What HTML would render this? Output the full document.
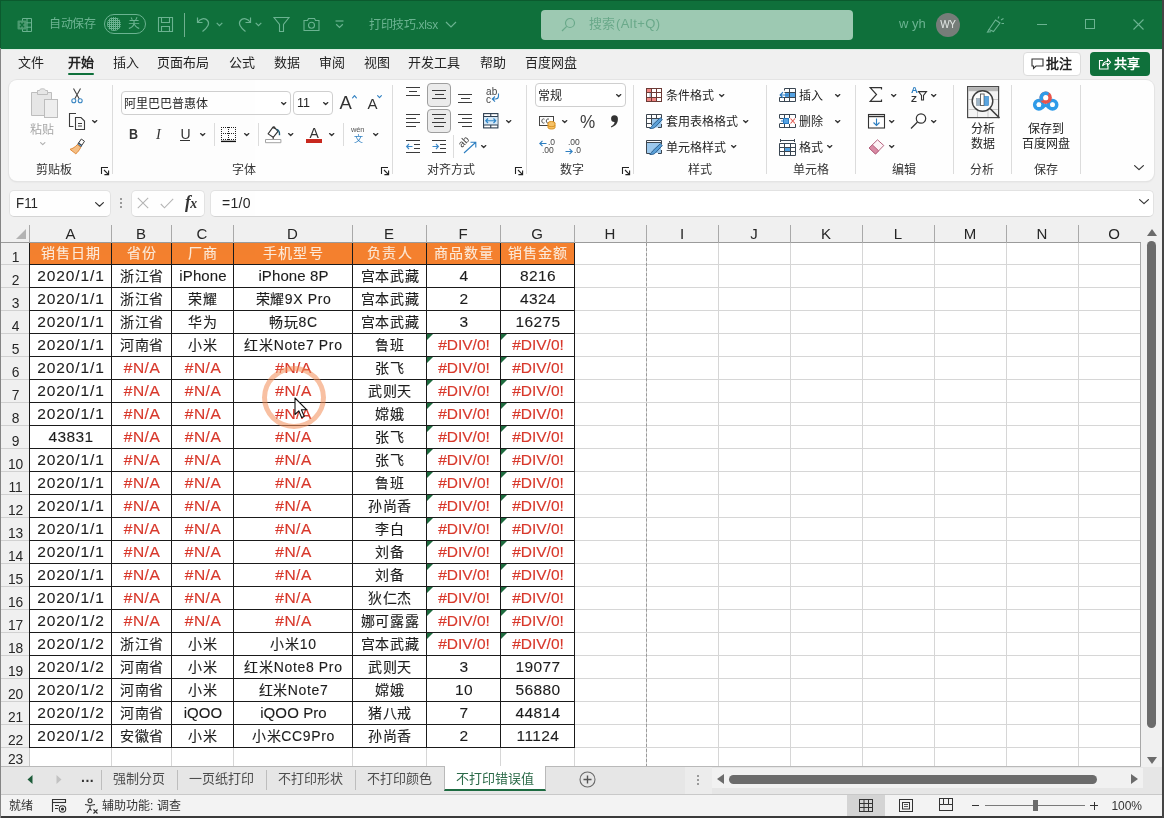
<!DOCTYPE html>
<html lang="zh-CN"><head><meta charset="utf-8"><title>打印技巧.xlsx - Excel</title>
<style>
*{box-sizing:border-box;margin:0;padding:0}
html,body{width:1164px;height:818px;overflow:hidden;background:#f0f0f0}
body{font-family:"Liberation Sans",sans-serif;font-size:13px;color:#242424}
#app{position:relative;width:1164px;height:818px;overflow:hidden;background:#f0f0f0;will-change:transform;opacity:.999}
.abs{position:absolute}
svg{position:absolute;overflow:visible}
/* ---------- title bar ---------- */
#title{position:absolute;left:0;top:0;width:1164px;height:49px;background:#0f703b}
#title .t{position:absolute;color:#6bb391;font-size:12px;white-space:nowrap;line-height:14px}
#search{position:absolute;left:541px;top:10px;width:312px;height:30px;background:#9dc9b2;border-radius:4px}
#search span{position:absolute;left:48px;top:7px;letter-spacing:.45px;font-size:13px;color:#6aa98a;line-height:14px;white-space:nowrap}
#avatar{position:absolute;left:936px;top:13px;width:24px;height:24px;border-radius:50%;background:#767d79;color:#e4e9e6;font-size:10px;text-align:center;line-height:24px;letter-spacing:-.3px}
/* ---------- menu tabs ---------- */
#tabs{position:absolute;left:0;top:50px;width:1164px;height:30px;background:#f0f0f0}
#tabs .m{position:absolute;top:5px;font-size:13px;line-height:16px;color:#242424;white-space:nowrap}
#tabs .m.on{font-weight:bold}
#tabs .ul{position:absolute;left:68px;top:23px;width:26px;height:2px;background:#0f703b;border-radius:1px}
.btn{position:absolute;border-radius:4px;font-size:13px;font-weight:bold;line-height:16px;white-space:nowrap}
/* ---------- ribbon ---------- */
#ribbon{position:absolute;left:9px;top:80px;width:1145px;height:101px;background:#fefefe;border-radius:8px;box-shadow:0 0 0 1px #e4e4e4,0 1px 2px rgba(0,0,0,.1)}
#rb{position:absolute;left:0;top:0;width:1164px;height:190px}
#rb .sep{position:absolute;top:85px;width:1px;height:89px;background:#dcdcdc}
#rb .ssep{position:absolute;top:123px;width:1px;height:23px;background:#dcdcdc}
#rb .lb{position:absolute;top:163px;font-size:12px;line-height:15px;color:#333;white-space:nowrap;transform:translateX(-50%)}
#rb .tx{position:absolute;font-size:12px;line-height:15px;color:#242424;white-space:nowrap}
#rb .box{position:absolute;background:#fff;border:1px solid #cfcfcf;border-radius:4px}
#rb .sel{position:absolute;background:#ebebeb;border:1px solid #9e9e9e;border-radius:4px}
/* ---------- formula bar ---------- */
.fbox{position:absolute;top:190px;height:27px;background:#fff;border-radius:5px;border:1px solid #e2e2e2;border-bottom-color:#d4d4d4}
/* ---------- grid ---------- */
#grid{position:absolute;left:0;top:0;width:1164px;height:818px;pointer-events:none}
.colhdr{position:absolute;left:0;top:224px;width:1141px;height:19px;background:#f0f0f0;border-bottom:1px solid #9b9b9b;z-index:3}
.corner{z-index:4;position:absolute;left:15px;top:228px;width:12px;height:12px}
.ch{position:absolute;z-index:4;top:225px;height:17px;line-height:17px;text-align:center;font-size:15px;color:#262626}
.chsep{z-index:4;position:absolute;top:225px;width:1px;height:18px;background:#a9a9a9}
.sheet{position:absolute;left:30px;top:243px;width:1111px;height:523px;background:#fff}
.gv{position:absolute;top:243px;width:1px;height:524px;background:#d6d6d6}
.gv2{position:absolute;top:748px;width:1px;height:19px;background:#d6d6d6}
.gh{position:absolute;left:30px;width:1110px;height:1px;background:#d6d6d6}
.pb{position:absolute;left:646px;top:243px;width:0;height:524px;border-left:1px dashed #9a9a9a}
.rowhdr{position:absolute;left:0;top:243px;width:30px;height:524px;background:#f0f0f0;border-right:1px solid #c6c6c6}
.rh{position:absolute;left:0;width:30px;transform:scaleX(.92);transform-origin:22px 0;height:23px;line-height:29px;text-align:center;font-size:15px;color:#262626}
.rhsep{position:absolute;left:0;width:29px;height:1px;background:#d0d0d0}
.c{position:absolute;height:24px;border:1px solid #1a1a1a;background:#fff;text-align:center;font-size:15.5px;line-height:22px;color:#1c1c1c;letter-spacing:.7px;white-space:nowrap;overflow:hidden;-webkit-text-stroke:.1px currentColor}
.c span{position:relative;left:.5px}
.c.zh{letter-spacing:.65px;font-size:14px;line-height:22px;-webkit-text-stroke:.12px currentColor}
.c.la{font-size:15px;letter-spacing:.1px}
.c.nm{letter-spacing:.9px}
.c.pn{letter-spacing:.4px}
.c.hd{background:#f4802e;color:#fce9d8;letter-spacing:1.2px;font-size:14px}
.c.er{color:#d8382b;letter-spacing:.5px;-webkit-text-stroke:.15px currentColor}
.c.dv{letter-spacing:0}
.tri{position:absolute;left:0;top:0;width:0;height:0;border-top:6px solid #1d6b3e;border-right:6px solid transparent}
/* ---------- bottom ---------- */
#sheetbar{position:absolute;left:0;top:767px;width:1164px;height:27px;background:#e6e6e6}
#sheetbar .st{position:absolute;top:4px;font-size:13px;line-height:16px;color:#4d4d4d;white-space:nowrap}
#sheetbar .ss{position:absolute;top:3px;width:1px;height:20px;background:#bdbdbd}
#status{position:absolute;left:0;top:794px;width:1164px;height:24px;background:#f3f3f3;border-top:1px solid #c9c9c9}
#status .s{position:absolute;top:5px;font-size:12px;line-height:14px;color:#333;white-space:nowrap}

</style></head><body>
<div id="app">
<div id="title">
  <div class="abs" style="left:0;top:0;width:1164px;height:1px;background:#0b5a2e"></div><div class="abs" style="left:0;top:0;width:1px;height:48px;background:#0b5a2e"></div>
  <!-- excel icon -->
  <svg style="left:17px;top:17px" width="16" height="16" viewBox="0 0 16 16" fill="none" stroke="#6bb391" stroke-width="1"><path d="M5.5 1.5H14.5V14.5H5.5Z M5.5 5.8H14.5 M5.5 10.2H14.5 M10 1.5V14.5"/><rect x="0.5" y="3.5" width="9" height="9" rx="1" fill="#4c9a70" stroke="none"/><path d="M3 5.7L7 10.3M7 5.7L3 10.3" stroke="#0f703b" stroke-width="1.3"/></svg>
  <span class="t" style="left:49px;top:17px;letter-spacing:-.3px">自动保存</span>
  <!-- toggle -->
  <div class="abs" style="left:104px;top:14px;width:42px;height:20px;border:1px solid #6bb391;border-radius:10px"></div>
  <div class="abs" style="left:107px;top:17px;width:14px;height:14px;border-radius:50%;background:repeating-linear-gradient(90deg,#6bb391 0 1px,transparent 1px 2px),repeating-linear-gradient(0deg,#6bb391 0 1px,#0f703b 1px 2px)"></div>
  <span class="t" style="left:128px;top:17px">关</span>
  <!-- save -->
  <svg style="left:157px;top:16px" width="17" height="17" viewBox="0 0 17 17" fill="none" stroke="#6bb391" stroke-width="1.1"><path d="M1.5 1.5H15.5V15.5H1.5Z"/><path d="M4.5 1.5V6.5H12.5V1.5"/><path d="M4.5 15.5V10.5H12.5V15.5"/></svg>
  <div class="abs" style="left:184px;top:13px;width:1px;height:24px;background:#6fb08f"></div>
  <!-- undo -->
  <svg style="left:196px;top:16px" width="17" height="17" viewBox="0 0 17 17" fill="none" stroke="#6bb391" stroke-width="1.2"><path d="M1.5 1.5V6.5H6.5"/><path d="M1.8 6.2C4 2.5 9 1.5 11.5 4.5C14 7.5 12 11 6.5 15.5"/></svg>
  <svg style="left:216px;top:22px" width="7" height="5" viewBox="0 0 7 5" fill="none" stroke="#6bb391" stroke-width="1.2"><path d="M.7 .8L3.5 3.6L6.3 .8"/></svg>
  <!-- redo -->
  <svg style="left:235px;top:16px" width="17" height="17" viewBox="0 0 17 17" fill="none" stroke="#6bb391" stroke-width="1.2"><path d="M15.5 1.5V6.5H10.5"/><path d="M15.2 6.2C13 2.5 8 1.5 5.5 4.5C3 7.5 5 11 10.5 15.5"/></svg>
  <svg style="left:255px;top:22px" width="7" height="5" viewBox="0 0 7 5" fill="none" stroke="#6bb391" stroke-width="1.2"><path d="M.7 .8L3.5 3.6L6.3 .8"/></svg>
  <!-- filter -->
  <svg style="left:273px;top:16px" width="17" height="17" viewBox="0 0 17 17" fill="none" stroke="#6bb391" stroke-width="1.1"><path d="M1 1.5H16L10.5 8.5V15.5H6.5V8.5Z"/></svg>
  <!-- camera -->
  <svg style="left:303px;top:17px" width="17" height="15" viewBox="0 0 17 15" fill="none" stroke="#6bb391" stroke-width="1.1"><path d="M1 3.5H4.5L5.5 1.5H11.5L12.5 3.5H16V13.5H1Z"/><circle cx="8.5" cy="8.2" r="3"/></svg>
  <!-- customize -->
  <svg style="left:335px;top:20px" width="9" height="9" viewBox="0 0 9 9" fill="none" stroke="#6bb391" stroke-width="1.2"><path d="M.5 1H8.5"/><path d="M1.2 4.2L4.5 7.4L7.8 4.2"/></svg>
  <span class="t" style="left:369px;top:18px;font-size:12px;letter-spacing:-.35px">打印技巧.xlsx</span>
  <svg style="left:445px;top:21px" width="12" height="7" viewBox="0 0 12 7" fill="none" stroke="#6bb391" stroke-width="1.2"><path d="M1 1L6 6L11 1"/></svg>
  <div id="search">
    <svg style="left:20px;top:7px" width="15" height="15" viewBox="0 0 15 15" fill="none" stroke="#6aa98a" stroke-width="1.2"><circle cx="9" cy="6" r="4.5"/><path d="M5.7 9.3L1 14"/></svg>
    <span>搜索(Alt+Q)</span>
  </div>
  <span class="t" style="left:899px;top:17px;font-size:13px">w yh</span>
  <div id="avatar">WY</div>
  <!-- coming soon / pen icon -->
  <svg style="left:986px;top:15px" width="19" height="18" viewBox="0 0 19 18" fill="none" stroke="#6bb391" stroke-width="1.1"><path d="M3 14.5L9.5 5L14 8L7.5 16.5Z"/><path d="M3 14.5L1.5 17L5 16.7"/><path d="M12 3.5L13 1.5M15 5L17.5 3.5M15.5 8.5H18"/></svg>
  <!-- window controls -->
  <div class="abs" style="left:1037px;top:24px;width:10px;height:1px;background:#6bb391"></div>
  <div class="abs" style="left:1085px;top:19px;width:10px;height:10px;border:1px solid #6bb391"></div>
  <svg style="left:1133px;top:19px" width="11" height="11" viewBox="0 0 11 11" fill="none" stroke="#6bb391" stroke-width="1.1"><path d="M.5 .5L10.5 10.5M10.5 .5L.5 10.5"/></svg>
</div>
<div class="abs" style="left:0;top:49px;width:1164px;height:1px;background:#dcefe4"></div>
<div id="tabs">
  <span class="m" style="left:18px">文件</span>
  <span class="m on" style="left:68px">开始</span>
  <span class="m" style="left:113px">插入</span>
  <span class="m" style="left:157px">页面布局</span>
  <span class="m" style="left:229px">公式</span>
  <span class="m" style="left:274px">数据</span>
  <span class="m" style="left:319px">审阅</span>
  <span class="m" style="left:364px">视图</span>
  <span class="m" style="left:408px">开发工具</span>
  <span class="m" style="left:480px">帮助</span>
  <span class="m" style="left:525px">百度网盘</span>
  <div class="ul"></div>
  <div class="btn" style="left:1023px;top:2px;width:58px;height:24px;background:#fff;border:1px solid #dcdcdc;color:#242424">
    <svg style="left:7px;top:5px" width="13" height="12" viewBox="0 0 13 12" fill="none" stroke="#333" stroke-width="1.1"><path d="M1 1H12V8H5L2.5 10.5V8H1Z"/></svg>
    <span class="abs" style="left:22px;top:3px">批注</span>
  </div>
  <div class="btn" style="left:1090px;top:2px;width:60px;height:24px;background:#0f703b;color:#fff">
    <svg style="left:8px;top:5px" width="13" height="13" viewBox="0 0 13 13" fill="none" stroke="#fff" stroke-width="1.1"><path d="M5 3.5H1.5V12H10V9"/><path d="M4.5 9C5 6 7 4.5 9.5 4.5V2L12.5 5.3L9.5 8.5V6.5C7.5 6.5 5.8 7.2 4.5 9Z"/></svg>
    <span class="abs" style="left:24px;top:4px">共享</span>
  </div>
</div>
<div id="ribbon"></div>
<div id="rb">
<svg style="left:31px;top:88px" width="28" height="31" viewBox="0 0 28 31" fill="#e6e6e6" stroke="#bdbdbd" stroke-width="1">
<path d="M.5 4.5H6.5V2.5H8.5C8.5 .2 14.5 .2 14.5 2.5H16.5V4.5H20.5V27.5H.5Z"/>
<path d="M6.5 4.5V6.5H16.5V4.5" fill="none"/>
<rect x="13.5" y="11.5" width="13" height="18" fill="#eeeeee"/></svg>
<span class="tx" style="left:30px;top:123px;color:#a6a6a6">粘贴</span>
<svg style="left:40.2px;top:141.9px" width="5.5" height="3.6" viewBox="0 0 5.5 3.6" fill="none" stroke="#b0b0b0" stroke-width="1.2" stroke-linecap="round" stroke-linejoin="round"><path d="M.6 .6L2.75 2.6L4.9 .6"/></svg>
<svg style="left:71px;top:88px" width="12" height="16" viewBox="0 0 12 16" fill="none" stroke-width="1.1">
<path d="M2.5 .5L8.3 11M9.5 .5L3.7 11" stroke="#444"/>
<circle cx="2.8" cy="12.8" r="2" stroke="#3a86c2"/><circle cx="9.2" cy="12.8" r="2" stroke="#3a86c2"/></svg>
<svg style="left:69px;top:113px" width="17" height="17" viewBox="0 0 17 17" fill="none" stroke="#3b3b3b" stroke-width="1.1">
<path d="M4.5 13.5H.5V.5H7"/>
<path d="M6.5 4.5H12L15.5 8V16.5H6.5Z" fill="#fafafa"/>
<path d="M9 10.5H13M9 13H13" stroke-width="1"/></svg>
<svg style="left:92.3px;top:119.5px" width="5.4" height="3.5" viewBox="0 0 5.4 3.5" fill="none" stroke="#333" stroke-width="1.35" stroke-linecap="round" stroke-linejoin="round"><path d="M.6 .6L2.7 2.5L4.800000000000001 .6"/></svg>
<svg style="left:69px;top:138px" width="17" height="17" viewBox="0 0 17 17" fill="none" stroke-width="1">
<path d="M12.3 1L15.5 3.3L12.8 7.3L9.6 5Z" fill="#fff" stroke="#3d3d3d"/>
<path d="M9.6 5L12.8 7.3L11.8 9L8.4 6.6Z" fill="#5b9bd5" stroke="#3d3d3d"/>
<path d="M8.4 6.6L11.8 9.2C10.5 12 8.5 14.5 6.8 15.8L1 11.3C3.5 10.8 6.5 8.8 8.4 6.6Z" fill="#f6bf85" stroke="#e08a3a"/></svg>
<span class="lb" style="left:54px">剪贴板</span>
<svg style="left:101px;top:167px" width="9" height="9" viewBox="0 0 9 9" fill="none" stroke="#222" stroke-width="1.1"><path d="M.5 7V.5H7"/><path d="M3 3L7.6 7.6M3.4 7.6H7.6V3.4"/></svg>
<div class="sep" style="left:112px"></div>
<div class="box" style="left:121px;top:91px;width:170px;height:24px"></div>
<span class="tx" style="left:124px;top:97px;">阿里巴巴普惠体</span>
<svg style="left:281.3px;top:101.5px" width="5.4" height="3.5" viewBox="0 0 5.4 3.5" fill="none" stroke="#333" stroke-width="1.35" stroke-linecap="round" stroke-linejoin="round"><path d="M.6 .6L2.7 2.5L4.800000000000001 .6"/></svg>
<div class="box" style="left:293px;top:91px;width:40px;height:24px"></div>
<span class="tx" style="left:297px;top:96px;font-size:12.5px">11</span>
<svg style="left:323.3px;top:101.5px" width="5.4" height="3.5" viewBox="0 0 5.4 3.5" fill="none" stroke="#333" stroke-width="1.35" stroke-linecap="round" stroke-linejoin="round"><path d="M.6 .6L2.7 2.5L4.800000000000001 .6"/></svg>
<span class="tx" style="left:339.5px;top:92.5px;font-size:18.5px;line-height:20px;color:#333">A</span>
<svg style="left:351.5px;top:95.4px" width="5" height="3.6" viewBox="0 0 5 3.6" fill="none" stroke="#2e7fc1" stroke-width="1.1" stroke-linecap="round" stroke-linejoin="round"><path d="M.6 2.8L2.5 .6L4.4 2.8"/></svg>
<span class="tx" style="left:367.5px;top:95.5px;font-size:15px;line-height:16px;color:#333">A</span>
<svg style="left:376.5px;top:95.4px" width="5" height="3.6" viewBox="0 0 5 3.6" fill="none" stroke="#2e7fc1" stroke-width="1.1" stroke-linecap="round" stroke-linejoin="round"><path d="M.6 .6L2.5 2.6L4.4 .6"/></svg>
<span class="tx" style="left:129px;top:126px;font-size:14.5px;font-weight:bold;line-height:16px;color:#333;transform:scaleX(.86);transform-origin:0 0">B</span>
<span class="tx" style="left:156px;top:126px;font-size:14.5px;font-style:italic;line-height:16px;color:#333;font-family:'Liberation Serif',serif">I</span>
<span class="tx" style="left:180.5px;top:126px;font-size:14px;line-height:16px;color:#333">U</span>
<div class="abs" style="left:180px;top:140px;width:10px;height:1px;background:#333"></div>
<svg style="left:200.3px;top:133.4px" width="5.4" height="3.5" viewBox="0 0 5.4 3.5" fill="none" stroke="#333" stroke-width="1.35" stroke-linecap="round" stroke-linejoin="round"><path d="M.6 .6L2.7 2.5L4.800000000000001 .6"/></svg>
<div class="ssep" style="left:214px;top:123px;height:23px"></div>
<svg style="left:221px;top:127px" width="16" height="16" viewBox="0 0 16 16" fill="none" stroke="#222" stroke-width="1">
<path d="M0 .5H15M0 6.5H15M0 12.5H15" stroke-dasharray="1 1"/>
<path d="M.5 0V13M7.5 0V13M14.5 0V13" stroke-dasharray="1 1"/>
<path d="M0 14.4H15" stroke-width="1.4" stroke="#111"/></svg>
<svg style="left:244.3px;top:133.4px" width="5.4" height="3.5" viewBox="0 0 5.4 3.5" fill="none" stroke="#333" stroke-width="1.35" stroke-linecap="round" stroke-linejoin="round"><path d="M.6 .6L2.7 2.5L4.800000000000001 .6"/></svg>
<div class="ssep" style="left:258px;top:123px;height:23px"></div>
<svg style="left:265px;top:126px" width="17" height="18" viewBox="0 0 17 18" fill="none" stroke="#333" stroke-width="1.1" stroke-linejoin="round">
<path d="M7.6 1.6L3.1 7.9L8.2 11.3L12.8 5.6C11.5 3 9.5 1.6 7.6 1.6Z" fill="#fff"/>
<path d="M7.6 1.6C8.3 .4 9.8 .6 10 2.3"/>
<path d="M11.6 3.4C13.8 4 14.7 6.3 14.5 9.3" stroke="#1d5a75" stroke-width="1.4"/>
<path d="M8.2 11.3V13.4"/>
<rect x=".5" y="13.5" width="15.4" height="3.2" fill="#fff" stroke="#a3a3a3" stroke-width="1"/></svg>
<svg style="left:288.3px;top:133.4px" width="5.4" height="3.5" viewBox="0 0 5.4 3.5" fill="none" stroke="#333" stroke-width="1.35" stroke-linecap="round" stroke-linejoin="round"><path d="M.6 .6L2.7 2.5L4.800000000000001 .6"/></svg>
<span class="tx" style="left:309.5px;top:124.5px;font-size:14px;line-height:16px;color:#333">A</span>
<div class="abs" style="left:306px;top:139px;width:16px;height:4px;background:#c8281e"></div>
<svg style="left:329.3px;top:133.4px" width="5.4" height="3.5" viewBox="0 0 5.4 3.5" fill="none" stroke="#333" stroke-width="1.35" stroke-linecap="round" stroke-linejoin="round"><path d="M.6 .6L2.7 2.5L4.800000000000001 .6"/></svg>
<div class="ssep" style="left:343px;top:123px;height:23px"></div>
<span class="tx" style="left:351px;top:126px;font-size:7.5px;line-height:8px;color:#555;letter-spacing:-.2px">wén</span>
<span class="tx" style="left:354px;top:134px;font-size:9px;line-height:10px;color:#2e7fc1">文</span>
<svg style="left:373.3px;top:133.4px" width="5.4" height="3.5" viewBox="0 0 5.4 3.5" fill="none" stroke="#333" stroke-width="1.35" stroke-linecap="round" stroke-linejoin="round"><path d="M.6 .6L2.7 2.5L4.800000000000001 .6"/></svg>
<span class="lb" style="left:244px">字体</span>
<svg style="left:381px;top:167px" width="9" height="9" viewBox="0 0 9 9" fill="none" stroke="#222" stroke-width="1.1"><path d="M.5 7V.5H7"/><path d="M3 3L7.6 7.6M3.4 7.6H7.6V3.4"/></svg>
<div class="sep" style="left:392px"></div>
<div class="abs" style="left:406.0px;top:87px;width:14px;height:1px;background:#3b3b3b"></div><div class="abs" style="left:409.0px;top:91px;width:8px;height:1px;background:#3b3b3b"></div><div class="abs" style="left:406.0px;top:95px;width:14px;height:1px;background:#3b3b3b"></div>
<div class="sel" style="left:427px;top:83px;width:24px;height:24px"></div>
<div class="abs" style="left:432.0px;top:90px;width:14px;height:1px;background:#3b3b3b"></div><div class="abs" style="left:434.5px;top:94px;width:9px;height:1px;background:#3b3b3b"></div><div class="abs" style="left:432.0px;top:98px;width:14px;height:1px;background:#3b3b3b"></div>
<div class="abs" style="left:458.0px;top:94px;width:14px;height:1px;background:#3b3b3b"></div><div class="abs" style="left:460.5px;top:98px;width:9px;height:1px;background:#3b3b3b"></div><div class="abs" style="left:458.0px;top:102px;width:14px;height:1px;background:#3b3b3b"></div>
<div class="abs" style="left:406px;top:114px;width:14px;height:1px;background:#3b3b3b"></div><div class="abs" style="left:406px;top:118px;width:10px;height:1px;background:#3b3b3b"></div><div class="abs" style="left:406px;top:122px;width:14px;height:1px;background:#3b3b3b"></div><div class="abs" style="left:406px;top:126px;width:10px;height:1px;background:#3b3b3b"></div>
<div class="sel" style="left:427px;top:109px;width:24px;height:24px"></div>
<div class="abs" style="left:432.0px;top:114px;width:14px;height:1px;background:#3b3b3b"></div><div class="abs" style="left:434.0px;top:118px;width:10px;height:1px;background:#3b3b3b"></div><div class="abs" style="left:432.0px;top:122px;width:14px;height:1px;background:#3b3b3b"></div><div class="abs" style="left:434.0px;top:126px;width:10px;height:1px;background:#3b3b3b"></div>
<div class="abs" style="left:458px;top:114px;width:14px;height:1px;background:#3b3b3b"></div><div class="abs" style="left:462px;top:118px;width:10px;height:1px;background:#3b3b3b"></div><div class="abs" style="left:458px;top:122px;width:14px;height:1px;background:#3b3b3b"></div><div class="abs" style="left:462px;top:126px;width:10px;height:1px;background:#3b3b3b"></div>
<div class="abs" style="left:406px;top:140px;width:14px;height:1px;background:#3b3b3b"></div><div class="abs" style="left:406px;top:152px;width:14px;height:1px;background:#3b3b3b"></div>
<div class="abs" style="left:414px;top:144px;width:6px;height:1px;background:#3b3b3b"></div><div class="abs" style="left:414px;top:148px;width:6px;height:1px;background:#3b3b3b"></div>
<svg style="left:406px;top:143px" width="7" height="7" viewBox="0 0 7 7" fill="none" stroke="#3b88c8" stroke-width="1.1"><path d="M6.5 3.5H.8M3 1L.6 3.5L3 6"/></svg>
<div class="abs" style="left:432px;top:140px;width:14px;height:1px;background:#3b3b3b"></div><div class="abs" style="left:432px;top:152px;width:14px;height:1px;background:#3b3b3b"></div>
<div class="abs" style="left:440px;top:144px;width:6px;height:1px;background:#3b3b3b"></div><div class="abs" style="left:440px;top:148px;width:6px;height:1px;background:#3b3b3b"></div>
<svg style="left:432px;top:143px" width="7" height="7" viewBox="0 0 7 7" fill="none" stroke="#3b88c8" stroke-width="1.1"><path d="M.5 3.5H6.2M4 1L6.4 3.5L4 6"/></svg>
<div class="ssep" style="left:453px;top:135px;height:23px"></div>
<span class="tx" style="left:458px;top:136px;font-size:10px;line-height:11px;color:#444;transform:rotate(-45deg);transform-origin:center">ab</span>
<svg style="left:463px;top:141px" width="14" height="13" viewBox="0 0 14 13" fill="none" stroke="#2e7fc1" stroke-width="1.1"><path d="M1 12L12.5 1.5M7.5 1.2H12.8V6.5"/></svg>
<svg style="left:481.3px;top:145.4px" width="5.4" height="3.5" viewBox="0 0 5.4 3.5" fill="none" stroke="#333" stroke-width="1.35" stroke-linecap="round" stroke-linejoin="round"><path d="M.6 .6L2.7 2.5L4.800000000000001 .6"/></svg>
<span class="tx" style="left:486px;top:87px;font-size:10px;line-height:10px;color:#444;letter-spacing:.3px">ab</span>
<span class="tx" style="left:486px;top:95px;font-size:10px;line-height:10px;color:#444">c</span>
<svg style="left:491px;top:93px" width="9" height="10" viewBox="0 0 9 10" fill="none" stroke="#2e7fc1" stroke-width="1.1"><path d="M7.5 .5V3C7.5 5 6.5 6 4.5 6H1.5M4 3.5L1.3 6L4 8.7"/></svg>
<svg style="left:483px;top:113px" width="16" height="16" viewBox="0 0 16 16" fill="none" stroke="#2c3e50" stroke-width="1.1">
<rect x=".6" y=".6" width="14.3" height="14.3" fill="#fff"/><rect x="1" y="3.5" width="13.5" height="8.5" fill="#d6e9f8" stroke="none"/>
<path d="M.6 3.5H14.9M.6 12H14.9M7.75 .6V3.5M7.75 12V14.9"/>
<path d="M3 7.75H12.5M5 5.5L2.8 7.75L5 10M10.5 5.5L12.7 7.75L10.5 10" stroke="#2e86c8" stroke-width="1.2"/></svg>
<svg style="left:506.3px;top:119.5px" width="5.4" height="3.5" viewBox="0 0 5.4 3.5" fill="none" stroke="#333" stroke-width="1.35" stroke-linecap="round" stroke-linejoin="round"><path d="M.6 .6L2.7 2.5L4.800000000000001 .6"/></svg>
<span class="lb" style="left:451px">对齐方式</span>
<svg style="left:515px;top:167px" width="9" height="9" viewBox="0 0 9 9" fill="none" stroke="#222" stroke-width="1.1"><path d="M.5 7V.5H7"/><path d="M3 3L7.6 7.6M3.4 7.6H7.6V3.4"/></svg>
<div class="sep" style="left:526px"></div>
<div class="box" style="left:535px;top:83px;width:91px;height:24px"></div>
<span class="tx" style="left:538px;top:89px;">常规</span>
<svg style="left:616.3px;top:93.5px" width="5.4" height="3.5" viewBox="0 0 5.4 3.5" fill="none" stroke="#333" stroke-width="1.35" stroke-linecap="round" stroke-linejoin="round"><path d="M.6 .6L2.7 2.5L4.800000000000001 .6"/></svg>
<svg style="left:539px;top:115px" width="18" height="15" viewBox="0 0 18 15" fill="none" stroke="#444" stroke-width="1">
<rect x=".5" y="1.5" width="14" height="9"/>
<path d="M5.5 4.2C4 3.2 2.8 4.5 2.8 6S4 8.8 5.5 7.8M10 4.2C8.5 3.2 7.3 4.5 7.3 6S8.5 8.8 10 7.8" stroke-width=".9"/>
<ellipse cx="12.5" cy="8" rx="3.5" ry="1.5" fill="#f6c267" stroke="#d78f1e"/>
<path d="M9 8V12.5C9 14.5 16 14.5 16 12.5V8" fill="#f6c267" stroke="#d78f1e"/>
<path d="M9 10.3C9 12 16 12 16 10.3" stroke="#d78f1e"/></svg>
<svg style="left:562.3px;top:119.5px" width="5.4" height="3.5" viewBox="0 0 5.4 3.5" fill="none" stroke="#333" stroke-width="1.35" stroke-linecap="round" stroke-linejoin="round"><path d="M.6 .6L2.7 2.5L4.800000000000001 .6"/></svg>
<span class="tx" style="left:580px;top:111.5px;font-size:19px;line-height:20px;color:#3d3d3d;transform:scaleX(.9);transform-origin:0 0">%</span>
<svg style="left:610px;top:114px" width="9" height="14" viewBox="0 0 9 14"><path d="M4.4 1.2A3.4 3.4 0 1 0 4.6 8C4.5 9.8 3.2 11.3 .9 12.5L1.3 13.4C5.6 12 8.1 9 7.9 4.7A3.5 3.5 0 0 0 4.4 1.2Z" fill="#333"/></svg>
<svg style="left:539px;top:140px" width="8" height="7" viewBox="0 0 8 7" fill="none" stroke="#2e7fc1" stroke-width="1.1"><path d="M7.5 3.5H1M3.5 .8L.8 3.5L3.5 6.2"/></svg>
<span class="tx" style="left:548px;top:138px;font-size:8.5px;line-height:8px;color:#444;letter-spacing:0">.0</span>
<span class="tx" style="left:542px;top:146px;font-size:8.5px;line-height:8px;color:#444;letter-spacing:0">.00</span>
<span class="tx" style="left:568px;top:138px;font-size:8.5px;line-height:8px;color:#444;letter-spacing:0">.00</span>
<svg style="left:565px;top:148px" width="8" height="7" viewBox="0 0 8 7" fill="none" stroke="#2e7fc1" stroke-width="1.1"><path d="M.5 3.5H7M4.5 .8L7.2 3.5L4.5 6.2"/></svg>
<span class="tx" style="left:574px;top:146px;font-size:8.5px;line-height:8px;color:#444;letter-spacing:0">.0</span>
<span class="lb" style="left:572px">数字</span>
<svg style="left:622px;top:167px" width="9" height="9" viewBox="0 0 9 9" fill="none" stroke="#222" stroke-width="1.1"><path d="M.5 7V.5H7"/><path d="M3 3L7.6 7.6M3.4 7.6H7.6V3.4"/></svg>
<div class="sep" style="left:633px"></div>
<svg style="left:646px;top:88px" width="16" height="14" viewBox="0 0 16 14" fill="none" stroke="#6b3a36" stroke-width="1">
<rect x=".5" y=".5" width="15" height="13" fill="#fff"/>
<rect x="1" y="1" width="5" height="4" fill="#ef8582" stroke="none"/><rect x="1" y="9.5" width="9.5" height="3.5" fill="#ef8582" stroke="none"/><rect x="3.5" y="5" width="2.5" height="4.5" fill="#a7b7c9" stroke="none"/>
<path d="M.5 4.5H15.5M.5 9.5H15.5M5.5 .5V13.5M10.5 .5V13.5"/></svg>
<span class="tx" style="left:666px;top:89px;">条件格式</span>
<svg style="left:718.8px;top:93.5px" width="5.4" height="3.5" viewBox="0 0 5.4 3.5" fill="none" stroke="#333" stroke-width="1.35" stroke-linecap="round" stroke-linejoin="round"><path d="M.6 .6L2.7 2.5L4.800000000000001 .6"/></svg>
<svg style="left:646px;top:114px" width="17" height="15" viewBox="0 0 17 15" fill="none" stroke="#3d4650" stroke-width="1">
<rect x="6" y="5" width="9.5" height="8.5" fill="#9cc8ec" stroke="none"/>
<path d="M15.5 4V.5H.5V13.5H4M.5 4.5H15.5M.5 9.5H6M5.5 .5V11M10.5 .5V5M12 13.5H15.5V10"/>
<path d="M14.3 3.7L16.3 5.5L9.5 12.8C8 14.5 5.5 14.7 3.8 14.4C5.3 13.4 5.6 12 6.8 10.8Z" fill="#5aa0d8" stroke="#2b5f8f"/></svg>
<span class="tx" style="left:666px;top:115px;">套用表格格式</span>
<svg style="left:742.8px;top:119.5px" width="5.4" height="3.5" viewBox="0 0 5.4 3.5" fill="none" stroke="#333" stroke-width="1.35" stroke-linecap="round" stroke-linejoin="round"><path d="M.6 .6L2.7 2.5L4.800000000000001 .6"/></svg>
<svg style="left:646px;top:140px" width="17" height="15" viewBox="0 0 17 15" fill="none" stroke="#3d4650" stroke-width="1">
<rect x="1" y="3" width="14" height="10" fill="#9cc8ec" stroke="none"/>
<path d="M15.5 4V.5H.5V13.5H4M.5 2.5H15.5M12 13.5H15.5V10"/>
<path d="M14.3 3.7L16.3 5.5L9.5 12.8C8 14.5 5.5 14.7 3.8 14.4C5.3 13.4 5.6 12 6.8 10.8Z" fill="#5aa0d8" stroke="#2b5f8f"/></svg>
<span class="tx" style="left:666px;top:141px;">单元格样式</span>
<svg style="left:730.8px;top:145.4px" width="5.4" height="3.5" viewBox="0 0 5.4 3.5" fill="none" stroke="#333" stroke-width="1.35" stroke-linecap="round" stroke-linejoin="round"><path d="M.6 .6L2.7 2.5L4.800000000000001 .6"/></svg>
<span class="lb" style="left:700px">样式</span>
<div class="sep" style="left:766px"></div>
<svg style="left:779px;top:88px" width="17" height="14" viewBox="0 0 17 14" fill="none" stroke="#3a4652" stroke-width="1">
<rect x="6" y="5" width="10" height="4.5" fill="#55a3e3" stroke="none"/>
<path d="M5.5 2.5V.5H16.5V13.5H.5V9.5H16.5M5.5 4.5H16.5M10.5 .5V13.5M5.5 9.5V13.5"/>
<path d="M9.5 7H1.2M4 4.2L1.2 7L4 9.8" stroke="#2878c0" stroke-width="1.2"/></svg>
<span class="tx" style="left:799px;top:89px;">插入</span>
<svg style="left:835.3px;top:93.5px" width="5.4" height="3.5" viewBox="0 0 5.4 3.5" fill="none" stroke="#333" stroke-width="1.35" stroke-linecap="round" stroke-linejoin="round"><path d="M.6 .6L2.7 2.5L4.800000000000001 .6"/></svg>
<svg style="left:779px;top:114px" width="17" height="14" viewBox="0 0 17 14" fill="none" stroke="#3a4652" stroke-width="1">
<path d="M.5 4V.5H16.5V4M.5 10V13.5H16.5V10M5.5 .5V4M10.5 .5V4M5.5 10V13.5M10.5 10V13.5M.5 4.5H4M.5 9.5H4"/>
<rect x="4.5" y="4.5" width="5" height="5" fill="#55a3e3" stroke="#2878c0"/>
<path d="M2 7H4.5" stroke="#2878c0"/>
<path d="M11.5 4.5L16 9.5M16 4.5L11.5 9.5" stroke="#e0584f" stroke-width="1.1"/></svg>
<span class="tx" style="left:799px;top:115px;">删除</span>
<svg style="left:835.3px;top:119.5px" width="5.4" height="3.5" viewBox="0 0 5.4 3.5" fill="none" stroke="#333" stroke-width="1.35" stroke-linecap="round" stroke-linejoin="round"><path d="M.6 .6L2.7 2.5L4.800000000000001 .6"/></svg>
<svg style="left:779px;top:139px" width="17" height="17" viewBox="0 0 17 17" fill="none" stroke="#3a4652" stroke-width="1">
<path d="M1.5 1.5H15.5M1.5 0V3M15.5 0V3"/>
<rect x="6" y="8" width="5" height="4.5" fill="#55a3e3" stroke="none"/>
<path d="M.5 4.5H16.5V16.5H.5ZM.5 8.5H16.5M.5 12.5H16.5M5.5 4.5V16.5M11.5 4.5V16.5"/></svg>
<span class="tx" style="left:799px;top:141px;">格式</span>
<svg style="left:827.3px;top:145.4px" width="5.4" height="3.5" viewBox="0 0 5.4 3.5" fill="none" stroke="#333" stroke-width="1.35" stroke-linecap="round" stroke-linejoin="round"><path d="M.6 .6L2.7 2.5L4.800000000000001 .6"/></svg>
<span class="lb" style="left:811px">单元格</span>
<div class="sep" style="left:855px"></div>
<svg style="left:869px;top:87px" width="14" height="15" viewBox="0 0 14 15" fill="none" stroke="#333" stroke-width="1.2" stroke-linejoin="miter"><path d="M12.5 2.5V.7H1.2L7.5 7.5L1.2 14.3H12.5V12.5"/></svg>
<svg style="left:891.3px;top:93.5px" width="5.4" height="3.5" viewBox="0 0 5.4 3.5" fill="none" stroke="#333" stroke-width="1.35" stroke-linecap="round" stroke-linejoin="round"><path d="M.6 .6L2.7 2.5L4.800000000000001 .6"/></svg>
<span class="tx" style="left:911px;top:85px;font-size:9.5px;line-height:10px;color:#2e7fc1;font-weight:bold">A</span>
<span class="tx" style="left:911px;top:94px;font-size:9.5px;line-height:10px;color:#333;font-weight:bold">Z</span>
<svg style="left:918px;top:91px" width="9" height="10" viewBox="0 0 9 10" fill="none" stroke="#333" stroke-width="1.1"><path d="M.5 .6H8.5L5.5 4.5V9H3.5V4.5Z"/></svg>
<svg style="left:931.3px;top:93.5px" width="5.4" height="3.5" viewBox="0 0 5.4 3.5" fill="none" stroke="#333" stroke-width="1.35" stroke-linecap="round" stroke-linejoin="round"><path d="M.6 .6L2.7 2.5L4.800000000000001 .6"/></svg>
<svg style="left:868px;top:114px" width="17" height="15" viewBox="0 0 17 15" fill="none" stroke="#333" stroke-width="1.1">
<rect x=".5" y=".5" width="16" height="13.5"/><path d="M.5 2.5H16.5" stroke-width="1.4"/>
<path d="M8.5 4.5V11.5M5.5 8.5L8.5 11.5L11.5 8.5" stroke="#2e7fc1"/></svg>
<svg style="left:889.3px;top:119.5px" width="5.4" height="3.5" viewBox="0 0 5.4 3.5" fill="none" stroke="#333" stroke-width="1.35" stroke-linecap="round" stroke-linejoin="round"><path d="M.6 .6L2.7 2.5L4.800000000000001 .6"/></svg>
<svg style="left:910px;top:113px" width="17" height="16" viewBox="0 0 17 16" fill="none" stroke="#333" stroke-width="1.2"><circle cx="11" cy="5.5" r="4.7"/><path d="M7.5 9L1 15.5"/></svg>
<svg style="left:931.3px;top:119.5px" width="5.4" height="3.5" viewBox="0 0 5.4 3.5" fill="none" stroke="#333" stroke-width="1.35" stroke-linecap="round" stroke-linejoin="round"><path d="M.6 .6L2.7 2.5L4.800000000000001 .6"/></svg>
<svg style="left:868px;top:139px" width="17" height="16" viewBox="0 0 17 16" fill="none" stroke-width="1">
<path d="M9.5 .8L15.8 6.5L7.5 15L1 9Z" fill="#fdf3f6" stroke="#b5637f"/>
<path d="M4.3 5.8L10.7 11.8L7.5 15L1 9Z" fill="#d98aa4" stroke="#b5637f"/></svg>
<svg style="left:889.3px;top:145.4px" width="5.4" height="3.5" viewBox="0 0 5.4 3.5" fill="none" stroke="#333" stroke-width="1.35" stroke-linecap="round" stroke-linejoin="round"><path d="M.6 .6L2.7 2.5L4.800000000000001 .6"/></svg>
<span class="lb" style="left:904px">编辑</span>
<div class="sep" style="left:953px"></div>
<svg style="left:967px;top:86px" width="34" height="34" viewBox="0 0 34 34" fill="none" stroke="#8a8a8a" stroke-width="1">
<rect x=".6" y=".6" width="31" height="31" fill="#f3f3f3" stroke="#4a4a4a" stroke-width="1.2"/>
<rect x="1.2" y="1.2" width="29.8" height="4" fill="#b5b5b5" stroke="none"/>
<path d="M1 13.5H31M1 23.5H31M10.5 5V31M21 5V31" stroke="#c9c9c9"/>
<circle cx="15.5" cy="15" r="10.3" fill="#fbfbfb" stroke="#3d3d3d" stroke-width="1.4"/>
<rect x="9.5" y="12.5" width="3.6" height="7" fill="#9fb6c8" stroke="#8b9aa6" stroke-width=".6"/><rect x="13.5" y="8" width="3.6" height="11.5" fill="#fff" stroke="#555" stroke-width=".9"/><rect x="17.5" y="10.5" width="4" height="9" fill="#5aa5e0" stroke="#2e7fc1" stroke-width=".6"/>
<path d="M23 22.5L32.5 32" stroke="#3d3d3d" stroke-width="1.6"/></svg>
<span class="tx" style="left:971px;top:122px;">分析</span>
<span class="tx" style="left:971px;top:137px;">数据</span>
<span class="lb" style="left:982px">分析</span>
<div class="sep" style="left:1011px"></div>
<svg style="left:1032px;top:90px" width="28" height="23" viewBox="0 0 28 23" fill="none" stroke-linecap="round">
<circle cx="6.9" cy="14.7" r="4.2" stroke="#2f9be8" stroke-width="3.6"/>
<circle cx="20.5" cy="14.7" r="4.2" stroke="#2f9be8" stroke-width="3.6"/>
<path d="M11 17.5L13.7 15L16.4 17.5" stroke="#2f9be8" stroke-width="2.4"/>
<circle cx="13.7" cy="7.7" r="4.4" stroke="#e8554d" stroke-width="3.6"/>
<path d="M9.5 9A4.4 4.4 0 0 1 15 3.5" stroke="#2f9be8" stroke-width="3.6"/>
<circle cx="13.7" cy="7.7" r="2.4" fill="#fff"/><circle cx="6.9" cy="14.7" r="2.3" fill="#fff"/><circle cx="20.5" cy="14.7" r="2.3" fill="#fff"/></svg>
<span class="tx" style="left:1028px;top:122px;">保存到</span>
<span class="tx" style="left:1022px;top:137px;">百度网盘</span>
<span class="lb" style="left:1046px">保存</span>
<div class="sep" style="left:1080px"></div>
<svg style="left:1134.0px;top:165.4px" width="10" height="5.6" viewBox="0 0 10 5.6" fill="none" stroke="#333" stroke-width="1.2" stroke-linecap="round" stroke-linejoin="round"><path d="M.6 .6L5.0 4.6L9.4 .6"/></svg>
</div>
<div class="fbox" style="left:9px;width:102px"></div>
<div class="fbox" style="left:131px;width:74px"></div>
<div class="fbox" style="left:210px;width:944px"></div>
<span class="abs" style="left:16px;top:194px;font-size:15.5px;line-height:18px;color:#262626;transform:scaleX(.86);transform-origin:0 0">F11</span>
<svg style="left:94.5px;top:201.6px" width="9" height="5.2" viewBox="0 0 9 5.2" fill="none" stroke="#333" stroke-width="1.2" stroke-linecap="round" stroke-linejoin="round"><path d="M.6 .6L4.5 4.2L8.4 .6"/></svg>
<div class="abs" style="left:120px;top:198px;width:2px;height:2px;background:#9a9a9a;box-shadow:0 4px 0 #9a9a9a,0 8px 0 #9a9a9a"></div>
<svg style="left:137px;top:197px" width="12" height="12" viewBox="0 0 12 12" fill="none" stroke="#b4b4b4" stroke-width="1.1"><path d="M.8 .8L11.2 11.2M11.2 .8L.8 11.2"/></svg>
<svg style="left:160px;top:198px" width="14" height="11" viewBox="0 0 14 11" fill="none" stroke="#b4b4b4" stroke-width="1.1"><path d="M.8 6L4.5 9.8L13.2 .8"/></svg>
<span class="abs" style="left:185px;top:192px;font-size:18px;line-height:20px;color:#333;font-style:italic;font-weight:bold;font-family:'Liberation Serif',serif;letter-spacing:-.5px;transform:scaleX(.95);transform-origin:0 0">f<span style="font-size:14.5px">x</span></span>
<span class="abs" style="left:222px;top:195px;font-size:14px;line-height:17px;color:#262626;letter-spacing:.3px">=1/0</span>
<svg style="left:1139.0px;top:199.4px" width="10" height="5.6" viewBox="0 0 10 5.6" fill="none" stroke="#333" stroke-width="1.2" stroke-linecap="round" stroke-linejoin="round"><path d="M.6 .6L5.0 4.6L9.4 .6"/></svg>

<div id="grid">
<div class="colhdr"></div>
<div class="corner"><svg width="12" height="12" viewBox="0 0 12 12"><path d="M11 1V11H1Z" fill="#b3b3b3"/></svg></div>
<div class="ch" style="left:30px;width:81px">A</div>
<div class="chsep" style="left:111px"></div>
<div class="ch" style="left:111px;width:60px">B</div>
<div class="chsep" style="left:171px"></div>
<div class="ch" style="left:171px;width:62px">C</div>
<div class="chsep" style="left:233px"></div>
<div class="ch" style="left:233px;width:119px">D</div>
<div class="chsep" style="left:352px"></div>
<div class="ch" style="left:352px;width:74px">E</div>
<div class="chsep" style="left:426px"></div>
<div class="ch" style="left:426px;width:74px">F</div>
<div class="chsep" style="left:500px"></div>
<div class="ch" style="left:500px;width:74px">G</div>
<div class="chsep" style="left:574px"></div>
<div class="ch" style="left:574px;width:72px">H</div>
<div class="chsep" style="left:646px"></div>
<div class="ch" style="left:646px;width:72px">I</div>
<div class="chsep" style="left:718px"></div>
<div class="ch" style="left:718px;width:72px">J</div>
<div class="chsep" style="left:790px"></div>
<div class="ch" style="left:790px;width:72px">K</div>
<div class="chsep" style="left:862px"></div>
<div class="ch" style="left:862px;width:72px">L</div>
<div class="chsep" style="left:934px"></div>
<div class="ch" style="left:934px;width:72px">M</div>
<div class="chsep" style="left:1006px"></div>
<div class="ch" style="left:1006px;width:72px">N</div>
<div class="chsep" style="left:1078px"></div>
<div class="ch" style="left:1078px;width:72px">O</div>
<div class="chsep" style="left:29px"></div>
<div class="sheet"></div>
<div class="gv" style="left:646px"></div>
<div class="gv" style="left:718px"></div>
<div class="gv" style="left:790px"></div>
<div class="gv" style="left:862px"></div>
<div class="gv" style="left:934px"></div>
<div class="gv" style="left:1006px"></div>
<div class="gv" style="left:1078px"></div>
<div class="gv" style="left:1141px"></div>
<div class="gh" style="top:264px"></div>
<div class="gh" style="top:287px"></div>
<div class="gh" style="top:310px"></div>
<div class="gh" style="top:333px"></div>
<div class="gh" style="top:356px"></div>
<div class="gh" style="top:379px"></div>
<div class="gh" style="top:402px"></div>
<div class="gh" style="top:425px"></div>
<div class="gh" style="top:448px"></div>
<div class="gh" style="top:471px"></div>
<div class="gh" style="top:494px"></div>
<div class="gh" style="top:517px"></div>
<div class="gh" style="top:540px"></div>
<div class="gh" style="top:563px"></div>
<div class="gh" style="top:586px"></div>
<div class="gh" style="top:609px"></div>
<div class="gh" style="top:632px"></div>
<div class="gh" style="top:655px"></div>
<div class="gh" style="top:678px"></div>
<div class="gh" style="top:701px"></div>
<div class="gh" style="top:724px"></div>
<div class="gh" style="top:747px"></div>
<div class="gh" style="top:770px"></div>
<div class="gv2" style="left:111px"></div>
<div class="gv2" style="left:171px"></div>
<div class="gv2" style="left:233px"></div>
<div class="gv2" style="left:352px"></div>
<div class="gv2" style="left:426px"></div>
<div class="gv2" style="left:500px"></div>
<div class="gv2" style="left:574px"></div>
<div class="pb"></div>
<div class="rowhdr"></div>
<div class="rh" style="top:242px">1</div>
<div class="rhsep" style="top:264px"></div>
<div class="rh" style="top:265px">2</div>
<div class="rhsep" style="top:287px"></div>
<div class="rh" style="top:288px">3</div>
<div class="rhsep" style="top:310px"></div>
<div class="rh" style="top:311px">4</div>
<div class="rhsep" style="top:333px"></div>
<div class="rh" style="top:334px">5</div>
<div class="rhsep" style="top:356px"></div>
<div class="rh" style="top:357px">6</div>
<div class="rhsep" style="top:379px"></div>
<div class="rh" style="top:380px">7</div>
<div class="rhsep" style="top:402px"></div>
<div class="rh" style="top:403px">8</div>
<div class="rhsep" style="top:425px"></div>
<div class="rh" style="top:426px">9</div>
<div class="rhsep" style="top:448px"></div>
<div class="rh" style="top:449px">10</div>
<div class="rhsep" style="top:471px"></div>
<div class="rh" style="top:472px">11</div>
<div class="rhsep" style="top:494px"></div>
<div class="rh" style="top:495px">12</div>
<div class="rhsep" style="top:517px"></div>
<div class="rh" style="top:518px">13</div>
<div class="rhsep" style="top:540px"></div>
<div class="rh" style="top:541px">14</div>
<div class="rhsep" style="top:563px"></div>
<div class="rh" style="top:564px">15</div>
<div class="rhsep" style="top:586px"></div>
<div class="rh" style="top:587px">16</div>
<div class="rhsep" style="top:609px"></div>
<div class="rh" style="top:610px">17</div>
<div class="rhsep" style="top:632px"></div>
<div class="rh" style="top:633px">18</div>
<div class="rhsep" style="top:655px"></div>
<div class="rh" style="top:656px">19</div>
<div class="rhsep" style="top:678px"></div>
<div class="rh" style="top:679px">20</div>
<div class="rhsep" style="top:701px"></div>
<div class="rh" style="top:702px">21</div>
<div class="rhsep" style="top:724px"></div>
<div class="rh" style="top:725px">22</div>
<div class="rhsep" style="top:747px"></div>
<div class="rh" style="top:748px;line-height:22px">23</div>
<div class="rhsep" style="top:770px"></div>
<div class="c hd zh" style="left:29px;top:241px;width:83px"><span>销售日期</span></div>
<div class="c hd zh" style="left:111px;top:241px;width:61px"><span>省份</span></div>
<div class="c hd zh" style="left:171px;top:241px;width:63px"><span>厂商</span></div>
<div class="c hd zh" style="left:233px;top:241px;width:120px"><span>手机型号</span></div>
<div class="c hd zh" style="left:352px;top:241px;width:75px"><span>负责人</span></div>
<div class="c hd zh" style="left:426px;top:241px;width:75px"><span>商品数量</span></div>
<div class="c hd zh" style="left:500px;top:241px;width:75px"><span>销售金额</span></div>
<div class="c nm" style="left:29px;top:264px;width:83px"><span>2020/1/1</span></div>
<div class="c zh" style="left:111px;top:264px;width:61px"><span>浙江省</span></div>
<div class="c la" style="left:171px;top:264px;width:63px"><span>iPhone</span></div>
<div class="c la" style="left:233px;top:264px;width:120px"><span>iPhone 8P</span></div>
<div class="c zh" style="left:352px;top:264px;width:75px"><span>宫本武藏</span></div>
<div class="c nm pn" style="left:426px;top:264px;width:75px"><span>4</span></div>
<div class="c nm pn" style="left:500px;top:264px;width:75px"><span>8216</span></div>
<div class="c nm" style="left:29px;top:287px;width:83px"><span>2020/1/1</span></div>
<div class="c zh" style="left:111px;top:287px;width:61px"><span>浙江省</span></div>
<div class="c zh" style="left:171px;top:287px;width:63px"><span>荣耀</span></div>
<div class="c zh" style="left:233px;top:287px;width:120px"><span>荣耀9X Pro</span></div>
<div class="c zh" style="left:352px;top:287px;width:75px"><span>宫本武藏</span></div>
<div class="c nm pn" style="left:426px;top:287px;width:75px"><span>2</span></div>
<div class="c nm pn" style="left:500px;top:287px;width:75px"><span>4324</span></div>
<div class="c nm" style="left:29px;top:310px;width:83px"><span>2020/1/1</span></div>
<div class="c zh" style="left:111px;top:310px;width:61px"><span>浙江省</span></div>
<div class="c zh" style="left:171px;top:310px;width:63px"><span>华为</span></div>
<div class="c zh" style="left:233px;top:310px;width:120px"><span>畅玩8C</span></div>
<div class="c zh" style="left:352px;top:310px;width:75px"><span>宫本武藏</span></div>
<div class="c nm pn" style="left:426px;top:310px;width:75px"><span>3</span></div>
<div class="c nm pn" style="left:500px;top:310px;width:75px"><span>16275</span></div>
<div class="c nm" style="left:29px;top:333px;width:83px"><span>2020/1/1</span></div>
<div class="c zh" style="left:111px;top:333px;width:61px"><span>河南省</span></div>
<div class="c zh" style="left:171px;top:333px;width:63px"><span>小米</span></div>
<div class="c zh" style="left:233px;top:333px;width:120px"><span>红米Note7 Pro</span></div>
<div class="c zh" style="left:352px;top:333px;width:75px"><span>鲁班</span></div>
<div class="c er dv" style="left:426px;top:333px;width:75px"><i class="tri"></i><span>#DIV/0!</span></div>
<div class="c er dv" style="left:500px;top:333px;width:75px"><i class="tri"></i><span>#DIV/0!</span></div>
<div class="c nm" style="left:29px;top:356px;width:83px"><span>2020/1/1</span></div>
<div class="c er" style="left:111px;top:356px;width:61px"><span>#N/A</span></div>
<div class="c er" style="left:171px;top:356px;width:63px"><span>#N/A</span></div>
<div class="c er" style="left:233px;top:356px;width:120px"><span>#N/A</span></div>
<div class="c zh" style="left:352px;top:356px;width:75px"><span>张飞</span></div>
<div class="c er dv" style="left:426px;top:356px;width:75px"><i class="tri"></i><span>#DIV/0!</span></div>
<div class="c er dv" style="left:500px;top:356px;width:75px"><i class="tri"></i><span>#DIV/0!</span></div>
<div class="c nm" style="left:29px;top:379px;width:83px"><span>2020/1/1</span></div>
<div class="c er" style="left:111px;top:379px;width:61px"><span>#N/A</span></div>
<div class="c er" style="left:171px;top:379px;width:63px"><span>#N/A</span></div>
<div class="c er" style="left:233px;top:379px;width:120px"><span>#N/A</span></div>
<div class="c zh" style="left:352px;top:379px;width:75px"><span>武则天</span></div>
<div class="c er dv" style="left:426px;top:379px;width:75px"><i class="tri"></i><span>#DIV/0!</span></div>
<div class="c er dv" style="left:500px;top:379px;width:75px"><i class="tri"></i><span>#DIV/0!</span></div>
<div class="c nm" style="left:29px;top:402px;width:83px"><span>2020/1/1</span></div>
<div class="c er" style="left:111px;top:402px;width:61px"><span>#N/A</span></div>
<div class="c er" style="left:171px;top:402px;width:63px"><span>#N/A</span></div>
<div class="c er" style="left:233px;top:402px;width:120px"><span>#N/A</span></div>
<div class="c zh" style="left:352px;top:402px;width:75px"><span>嫦娥</span></div>
<div class="c er dv" style="left:426px;top:402px;width:75px"><i class="tri"></i><span>#DIV/0!</span></div>
<div class="c er dv" style="left:500px;top:402px;width:75px"><i class="tri"></i><span>#DIV/0!</span></div>
<div class="c nm pn" style="left:29px;top:425px;width:83px"><span>43831</span></div>
<div class="c er" style="left:111px;top:425px;width:61px"><span>#N/A</span></div>
<div class="c er" style="left:171px;top:425px;width:63px"><span>#N/A</span></div>
<div class="c er" style="left:233px;top:425px;width:120px"><span>#N/A</span></div>
<div class="c zh" style="left:352px;top:425px;width:75px"><span>张飞</span></div>
<div class="c er dv" style="left:426px;top:425px;width:75px"><i class="tri"></i><span>#DIV/0!</span></div>
<div class="c er dv" style="left:500px;top:425px;width:75px"><i class="tri"></i><span>#DIV/0!</span></div>
<div class="c nm" style="left:29px;top:448px;width:83px"><span>2020/1/1</span></div>
<div class="c er" style="left:111px;top:448px;width:61px"><span>#N/A</span></div>
<div class="c er" style="left:171px;top:448px;width:63px"><span>#N/A</span></div>
<div class="c er" style="left:233px;top:448px;width:120px"><span>#N/A</span></div>
<div class="c zh" style="left:352px;top:448px;width:75px"><span>张飞</span></div>
<div class="c er dv" style="left:426px;top:448px;width:75px"><i class="tri"></i><span>#DIV/0!</span></div>
<div class="c er dv" style="left:500px;top:448px;width:75px"><i class="tri"></i><span>#DIV/0!</span></div>
<div class="c nm" style="left:29px;top:471px;width:83px"><span>2020/1/1</span></div>
<div class="c er" style="left:111px;top:471px;width:61px"><span>#N/A</span></div>
<div class="c er" style="left:171px;top:471px;width:63px"><span>#N/A</span></div>
<div class="c er" style="left:233px;top:471px;width:120px"><span>#N/A</span></div>
<div class="c zh" style="left:352px;top:471px;width:75px"><span>鲁班</span></div>
<div class="c er dv" style="left:426px;top:471px;width:75px"><i class="tri"></i><span>#DIV/0!</span></div>
<div class="c er dv" style="left:500px;top:471px;width:75px"><i class="tri"></i><span>#DIV/0!</span></div>
<div class="c nm" style="left:29px;top:494px;width:83px"><span>2020/1/1</span></div>
<div class="c er" style="left:111px;top:494px;width:61px"><span>#N/A</span></div>
<div class="c er" style="left:171px;top:494px;width:63px"><span>#N/A</span></div>
<div class="c er" style="left:233px;top:494px;width:120px"><span>#N/A</span></div>
<div class="c zh" style="left:352px;top:494px;width:75px"><span>孙尚香</span></div>
<div class="c er dv" style="left:426px;top:494px;width:75px"><i class="tri"></i><span>#DIV/0!</span></div>
<div class="c er dv" style="left:500px;top:494px;width:75px"><i class="tri"></i><span>#DIV/0!</span></div>
<div class="c nm" style="left:29px;top:517px;width:83px"><span>2020/1/1</span></div>
<div class="c er" style="left:111px;top:517px;width:61px"><span>#N/A</span></div>
<div class="c er" style="left:171px;top:517px;width:63px"><span>#N/A</span></div>
<div class="c er" style="left:233px;top:517px;width:120px"><span>#N/A</span></div>
<div class="c zh" style="left:352px;top:517px;width:75px"><span>李白</span></div>
<div class="c er dv" style="left:426px;top:517px;width:75px"><i class="tri"></i><span>#DIV/0!</span></div>
<div class="c er dv" style="left:500px;top:517px;width:75px"><i class="tri"></i><span>#DIV/0!</span></div>
<div class="c nm" style="left:29px;top:540px;width:83px"><span>2020/1/1</span></div>
<div class="c er" style="left:111px;top:540px;width:61px"><span>#N/A</span></div>
<div class="c er" style="left:171px;top:540px;width:63px"><span>#N/A</span></div>
<div class="c er" style="left:233px;top:540px;width:120px"><span>#N/A</span></div>
<div class="c zh" style="left:352px;top:540px;width:75px"><span>刘备</span></div>
<div class="c er dv" style="left:426px;top:540px;width:75px"><i class="tri"></i><span>#DIV/0!</span></div>
<div class="c er dv" style="left:500px;top:540px;width:75px"><i class="tri"></i><span>#DIV/0!</span></div>
<div class="c nm" style="left:29px;top:563px;width:83px"><span>2020/1/1</span></div>
<div class="c er" style="left:111px;top:563px;width:61px"><span>#N/A</span></div>
<div class="c er" style="left:171px;top:563px;width:63px"><span>#N/A</span></div>
<div class="c er" style="left:233px;top:563px;width:120px"><span>#N/A</span></div>
<div class="c zh" style="left:352px;top:563px;width:75px"><span>刘备</span></div>
<div class="c er dv" style="left:426px;top:563px;width:75px"><i class="tri"></i><span>#DIV/0!</span></div>
<div class="c er dv" style="left:500px;top:563px;width:75px"><i class="tri"></i><span>#DIV/0!</span></div>
<div class="c nm" style="left:29px;top:586px;width:83px"><span>2020/1/1</span></div>
<div class="c er" style="left:111px;top:586px;width:61px"><span>#N/A</span></div>
<div class="c er" style="left:171px;top:586px;width:63px"><span>#N/A</span></div>
<div class="c er" style="left:233px;top:586px;width:120px"><span>#N/A</span></div>
<div class="c zh" style="left:352px;top:586px;width:75px"><span>狄仁杰</span></div>
<div class="c er dv" style="left:426px;top:586px;width:75px"><i class="tri"></i><span>#DIV/0!</span></div>
<div class="c er dv" style="left:500px;top:586px;width:75px"><i class="tri"></i><span>#DIV/0!</span></div>
<div class="c nm" style="left:29px;top:609px;width:83px"><span>2020/1/2</span></div>
<div class="c er" style="left:111px;top:609px;width:61px"><span>#N/A</span></div>
<div class="c er" style="left:171px;top:609px;width:63px"><span>#N/A</span></div>
<div class="c er" style="left:233px;top:609px;width:120px"><span>#N/A</span></div>
<div class="c zh" style="left:352px;top:609px;width:75px"><span>娜可露露</span></div>
<div class="c er dv" style="left:426px;top:609px;width:75px"><i class="tri"></i><span>#DIV/0!</span></div>
<div class="c er dv" style="left:500px;top:609px;width:75px"><i class="tri"></i><span>#DIV/0!</span></div>
<div class="c nm" style="left:29px;top:632px;width:83px"><span>2020/1/2</span></div>
<div class="c zh" style="left:111px;top:632px;width:61px"><span>浙江省</span></div>
<div class="c zh" style="left:171px;top:632px;width:63px"><span>小米</span></div>
<div class="c zh" style="left:233px;top:632px;width:120px"><span>小米10</span></div>
<div class="c zh" style="left:352px;top:632px;width:75px"><span>宫本武藏</span></div>
<div class="c er dv" style="left:426px;top:632px;width:75px"><i class="tri"></i><span>#DIV/0!</span></div>
<div class="c er dv" style="left:500px;top:632px;width:75px"><i class="tri"></i><span>#DIV/0!</span></div>
<div class="c nm" style="left:29px;top:655px;width:83px"><span>2020/1/2</span></div>
<div class="c zh" style="left:111px;top:655px;width:61px"><span>河南省</span></div>
<div class="c zh" style="left:171px;top:655px;width:63px"><span>小米</span></div>
<div class="c zh" style="left:233px;top:655px;width:120px"><span>红米Note8 Pro</span></div>
<div class="c zh" style="left:352px;top:655px;width:75px"><span>武则天</span></div>
<div class="c nm pn" style="left:426px;top:655px;width:75px"><span>3</span></div>
<div class="c nm pn" style="left:500px;top:655px;width:75px"><span>19077</span></div>
<div class="c nm" style="left:29px;top:678px;width:83px"><span>2020/1/2</span></div>
<div class="c zh" style="left:111px;top:678px;width:61px"><span>河南省</span></div>
<div class="c zh" style="left:171px;top:678px;width:63px"><span>小米</span></div>
<div class="c zh" style="left:233px;top:678px;width:120px"><span>红米Note7</span></div>
<div class="c zh" style="left:352px;top:678px;width:75px"><span>嫦娥</span></div>
<div class="c nm pn" style="left:426px;top:678px;width:75px"><span>10</span></div>
<div class="c nm pn" style="left:500px;top:678px;width:75px"><span>56880</span></div>
<div class="c nm" style="left:29px;top:701px;width:83px"><span>2020/1/2</span></div>
<div class="c zh" style="left:111px;top:701px;width:61px"><span>河南省</span></div>
<div class="c la" style="left:171px;top:701px;width:63px"><span>iQOO</span></div>
<div class="c la" style="left:233px;top:701px;width:120px"><span>iQOO Pro</span></div>
<div class="c zh" style="left:352px;top:701px;width:75px"><span>猪八戒</span></div>
<div class="c nm pn" style="left:426px;top:701px;width:75px"><span>7</span></div>
<div class="c nm pn" style="left:500px;top:701px;width:75px"><span>44814</span></div>
<div class="c nm" style="left:29px;top:724px;width:83px"><span>2020/1/2</span></div>
<div class="c zh" style="left:111px;top:724px;width:61px"><span>安徽省</span></div>
<div class="c zh" style="left:171px;top:724px;width:63px"><span>小米</span></div>
<div class="c zh" style="left:233px;top:724px;width:120px"><span>小米CC9Pro</span></div>
<div class="c zh" style="left:352px;top:724px;width:75px"><span>孙尚香</span></div>
<div class="c nm pn" style="left:426px;top:724px;width:75px"><span>2</span></div>
<div class="c nm pn" style="left:500px;top:724px;width:75px"><span>11124</span></div>
</div>
<!-- vertical scrollbar -->
<div class="abs" style="left:1141px;top:224px;width:21px;height:543px;background:#f0f0f0"></div>
<div class="abs" style="left:1140px;top:243px;width:1px;height:524px;background:#a8a8a8"></div>
<svg style="left:1147px;top:229px" width="10" height="7" viewBox="0 0 10 7"><path d="M5 0L10 7H0Z" fill="#6b6b6b"/></svg>
<div class="abs" style="left:1147px;top:241px;width:9px;height:487px;border-radius:4.5px;background:#6b6b6b"></div>
<svg style="left:1147px;top:757px" width="10" height="7" viewBox="0 0 10 7"><path d="M0 0H10L5 7Z" fill="#6b6b6b"/></svg>
<div id="sheetbar">
  <div class="abs" style="left:0;top:-1px;width:1141px;height:1px;background:#b9b9b9"></div>
  <svg style="left:27px;top:8px" width="6" height="9" viewBox="0 0 6 9"><path d="M5.5 0V9L.5 4.5Z" fill="#1d5c3a"/></svg>
  <svg style="left:56px;top:8px" width="6" height="9" viewBox="0 0 6 9"><path d="M.5 0V9L5.5 4.5Z" fill="#c2c2c2"/></svg>
  <span class="abs" style="left:81px;top:2px;font-size:14px;font-weight:bold;color:#333;letter-spacing:.5px;line-height:16px">...</span>
  <div class="ss" style="left:101px"></div>
  <span class="st" style="left:113px">强制分页</span>
  <div class="ss" style="left:177px"></div>
  <span class="st" style="left:189px">一页纸打印</span>
  <div class="ss" style="left:266px"></div>
  <span class="st" style="left:278px">不打印形状</span>
  <div class="ss" style="left:355px"></div>
  <span class="st" style="left:367px">不打印颜色</span>
  <div class="abs" style="left:444px;top:-1px;width:102px;height:25px;background:#fff;border-left:1px solid #b9b9b9;border-right:1px solid #b9b9b9;border-bottom:2px solid #1d6b41"></div>
  <span class="st" style="left:456px;color:#2b6a48">不打印错误值</span>
  <svg style="left:579px;top:4px" width="17" height="17" viewBox="0 0 17 17" fill="none" stroke="#6a6a6a" stroke-width="1.1"><circle cx="8.5" cy="8.5" r="7.5"/><path d="M4.5 8.5H12.5M8.5 4.5V12.5" stroke-width="1.4" stroke="#555"/></svg>
  <div class="abs" style="left:685px;top:0;width:27px;height:27px;background:#ececec"></div>
  <div class="abs" style="left:712px;top:1px;width:431px;height:20px;background:#f1f1f1"></div>
  <div class="abs" style="left:697px;top:8px;width:2px;height:2px;background:#9a9a9a;box-shadow:0 4px 0 #9a9a9a,0 8px 0 #9a9a9a"></div>
  <svg style="left:717px;top:7px" width="7" height="10" viewBox="0 0 7 10"><path d="M7 0V10L0 5Z" fill="#6b6b6b"/></svg>
  <div class="abs" style="left:729px;top:8px;width:368px;height:9px;border-radius:4.5px;background:#6b6b6b"></div>
  <svg style="left:1131px;top:7px" width="7" height="10" viewBox="0 0 7 10"><path d="M0 0V10L7 5Z" fill="#6b6b6b"/></svg>
</div>
<div id="status"><div class="abs" style="left:0;top:-1px;width:1164px;height:24px">
  <span class="s" style="left:9px">就绪</span>
  <svg style="left:52px;top:5px" width="15" height="14" viewBox="0 0 15 14" fill="none" stroke="#333" stroke-width="1.1"><path d="M.5 13V.5H13.5V4"/><path d="M.5 3.5H13.5"/><path d="M3 6.5H7M3 9.5H6"/><circle cx="10.5" cy="10" r="3.2"/><circle cx="10.5" cy="10" r="1" fill="#333"/></svg>
  <svg style="left:84px;top:4px" width="15" height="16" viewBox="0 0 15 16" fill="none" stroke="#333" stroke-width="1.1"><circle cx="6" cy="2.8" r="2"/><path d="M1 6.5L6 7.5L11 6.5M6 7.5V10.5L3 15M6 10.5L7.5 12.5"/><path d="M9.5 11.5L13.5 15.5M13.5 11.5L9.5 15.5"/></svg>
  <span class="s" style="left:102px">辅助功能: 调查</span>
  <div class="abs" style="left:847px;top:1px;width:38px;height:24px;background:#d4d4d4"></div>
  <svg style="left:859px;top:5px" width="14" height="13" viewBox="0 0 14 13" fill="none" stroke="#333" stroke-width="1"><rect x=".5" y=".5" width="13" height="12"/><path d="M.5 4.5H13.5M.5 8.5H13.5M5 .5V12.5M9.5 .5V12.5"/></svg>
  <svg style="left:899px;top:5px" width="14" height="13" viewBox="0 0 14 13" fill="none" stroke="#333" stroke-width="1"><rect x=".5" y=".5" width="13" height="12"/><rect x="3.5" y="3.5" width="7" height="6.5"/><path d="M5 5.5H9M5 7.5H9" stroke-width=".8"/></svg>
  <svg style="left:939px;top:4px" width="14" height="13" viewBox="0 0 14 13" fill="none" stroke="#333" stroke-width="1"><rect x=".5" y=".5" width="13" height="12"/><path d="M4.5 .5V6.5H9.5V.5M.5 6.5H4.5M9.5 6.5H13.5"/></svg>
  <div class="abs" style="left:972px;top:11px;width:7px;height:1px;background:#333"></div>
  <div class="abs" style="left:985px;top:11px;width:100px;height:1px;background:#7a7a7a"></div>
  <div class="abs" style="left:1033px;top:6px;width:5px;height:11px;background:#6b6b6b"></div>
  <div class="abs" style="left:1090px;top:11px;width:8px;height:1px;background:#333"></div>
  <div class="abs" style="left:1093.5px;top:7.5px;width:1px;height:8px;background:#333"></div>
  <span class="s" style="left:1111.5px;font-size:12px;letter-spacing:-.1px;top:5px">100%</span>
</div></div>
<!-- click highlight + mouse pointer -->
<div class="abs" style="left:262px;top:366px;width:64px;height:63px;border-radius:50%;border:5px solid rgba(242,140,85,.55)"></div>
<svg style="left:294px;top:397px" width="14" height="22" viewBox="0 0 14 22"><path d="M1 1V17.5L4.8 13.8L7.6 20.5L10.2 19.4L7.4 12.8H12.8Z" fill="#fff" stroke="#111" stroke-width="1.1" stroke-linejoin="round"/></svg>
<!-- window borders -->
<div class="abs" style="left:0;top:48px;width:1px;height:770px;background:#858585;z-index:10"></div>
<div class="abs" style="left:1162px;top:0;width:2px;height:818px;background:#454545;z-index:10"></div>
<div class="abs" style="left:0;top:816px;width:1164px;height:2px;background:#3a3a3a"></div>

</div>
</body></html>
